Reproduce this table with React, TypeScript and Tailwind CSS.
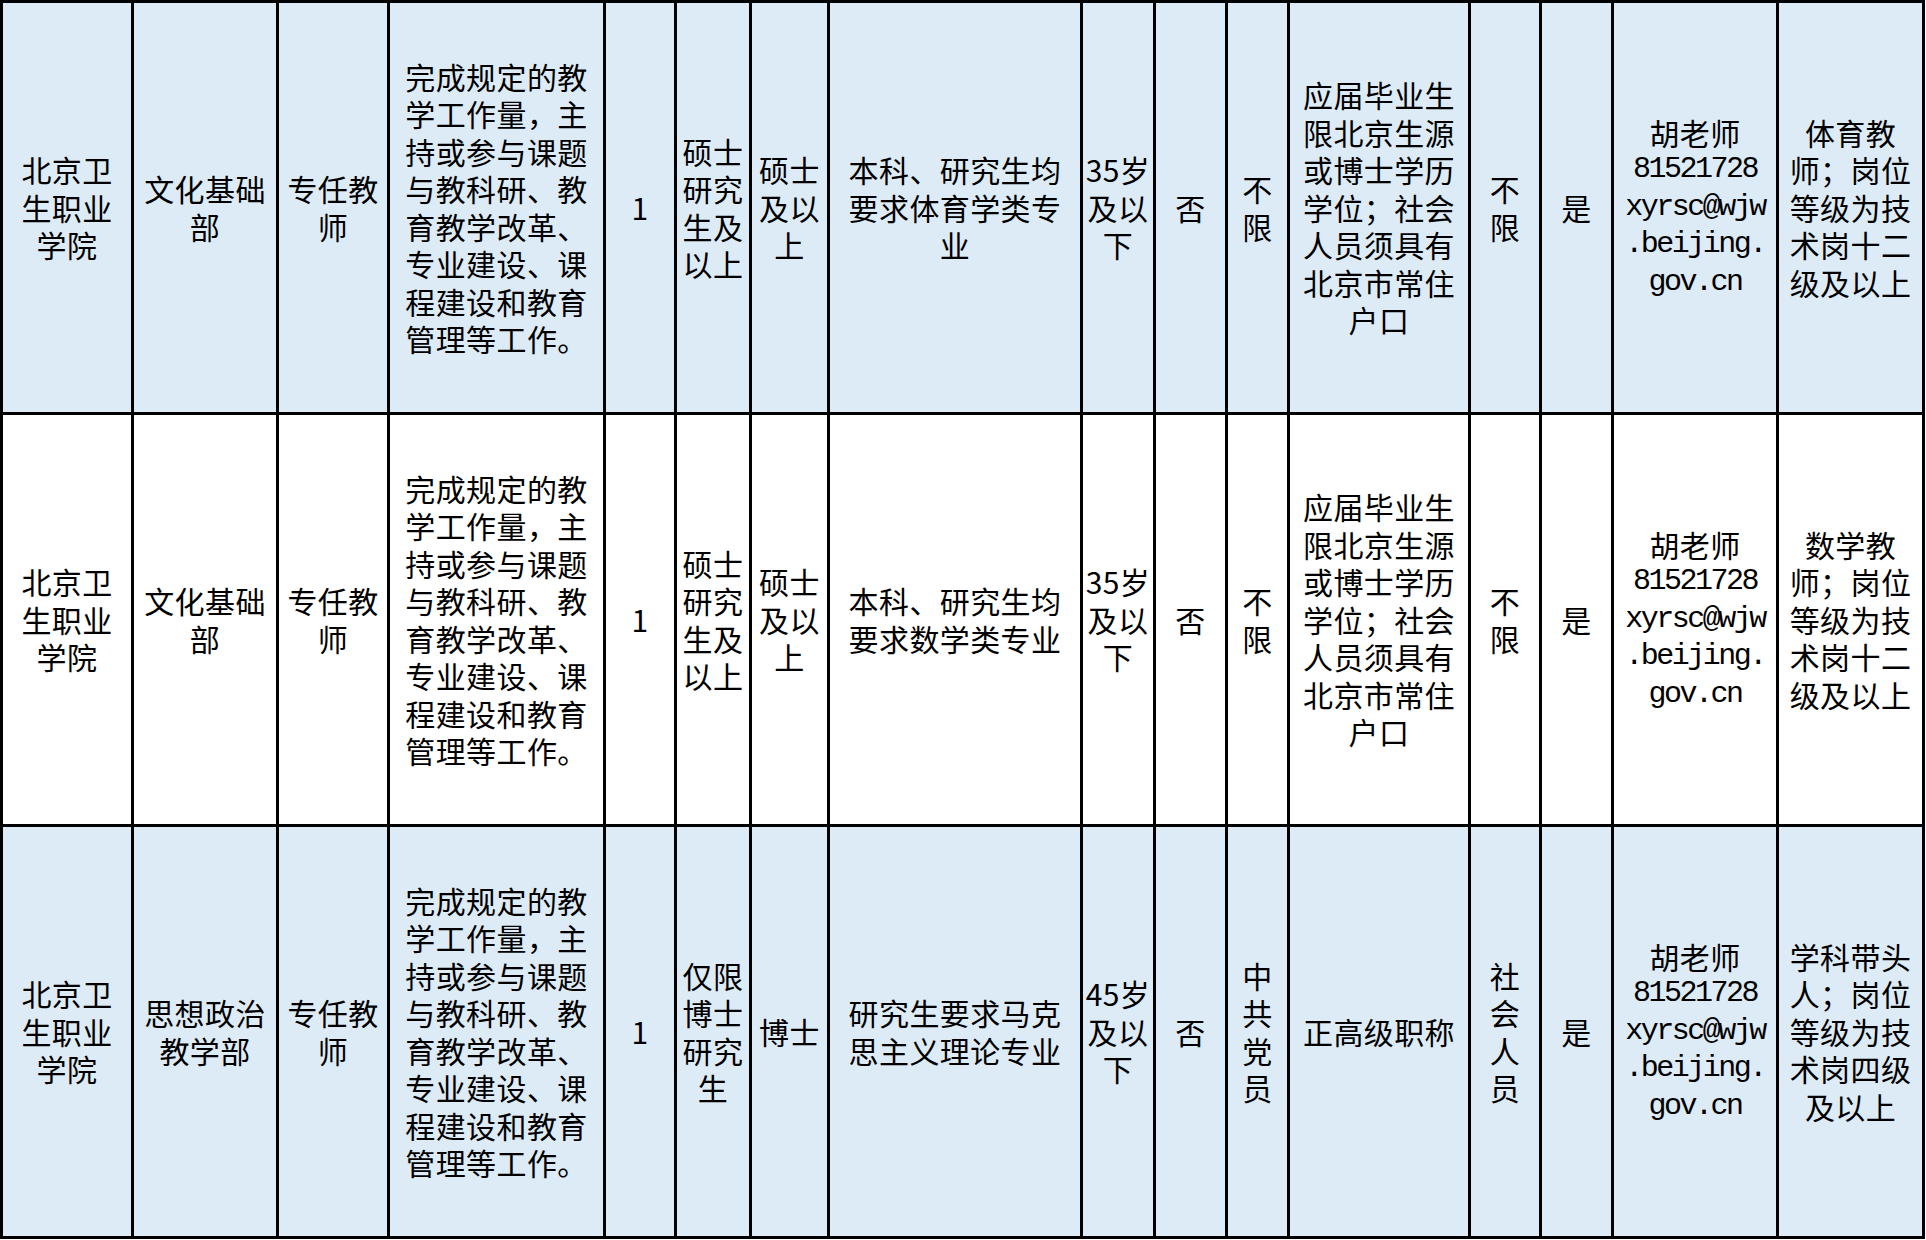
const desc = [
  '完成规定的教',
  '学工作量，主',
  '持或参与课题',
  '与教科研、教',
  '育教学改革、',
  '专业建设、课',
  '程建设和教育',
  '管理等工作。',
];

const contact = ['胡老师', '81521728', 'xyrsc@wjw', '.beijing.', 'gov.cn'];

type Row = {
  bg: string;
  cells: string[][];
};

const rows: Row[] = [
  {
    bg: 'bg-[#ddebf7]',
    cells: [
      ['北京卫', '生职业', '学院'],
      ['文化基础', '部'],
      ['专任教', '师'],
      desc,
      ['1'],
      ['硕士', '研究', '生及', '以上'],
      ['硕士', '及以', '上'],
      ['本科、研究生均', '要求体育学类专', '业'],
      ['35岁', '及以', '下'],
      ['否'],
      ['不', '限'],
      ['应届毕业生', '限北京生源', '或博士学历', '学位；社会', '人员须具有', '北京市常住', '户口'],
      ['不', '限'],
      ['是'],
      contact,
      ['体育教', '师；岗位', '等级为技', '术岗十二', '级及以上'],
    ],
  },
  {
    bg: 'bg-white',
    cells: [
      ['北京卫', '生职业', '学院'],
      ['文化基础', '部'],
      ['专任教', '师'],
      desc,
      ['1'],
      ['硕士', '研究', '生及', '以上'],
      ['硕士', '及以', '上'],
      ['本科、研究生均', '要求数学类专业'],
      ['35岁', '及以', '下'],
      ['否'],
      ['不', '限'],
      ['应届毕业生', '限北京生源', '或博士学历', '学位；社会', '人员须具有', '北京市常住', '户口'],
      ['不', '限'],
      ['是'],
      contact,
      ['数学教', '师；岗位', '等级为技', '术岗十二', '级及以上'],
    ],
  },
  {
    bg: 'bg-[#ddebf7]',
    cells: [
      ['北京卫', '生职业', '学院'],
      ['思想政治', '教学部'],
      ['专任教', '师'],
      desc,
      ['1'],
      ['仅限', '博士', '研究', '生'],
      ['博士'],
      ['研究生要求马克', '思主义理论专业'],
      ['45岁', '及以', '下'],
      ['否'],
      ['中', '共', '党', '员'],
      ['正高级职称'],
      ['社', '会', '人', '员'],
      ['是'],
      contact,
      ['学科带头', '人；岗位', '等级为技', '术岗四级', '及以上'],
    ],
  },
];

function Cell({ lines, bg, col }: { lines: string[]; bg: string; col: number }) {
  const isDesc = col === 3;
  const isContact = col === 14;
  return (
    <div className={`${bg} flex items-center justify-center`}>
      <div className={isDesc ? 'text-left' : 'text-center'}>
        {lines.map((line, i) => {
          const mono = isContact && i > 0;
          return (
            <div
              key={i}
              className={
                mono
                  ? "whitespace-nowrap font-['Liberation_Mono',monospace] text-[30px] leading-[37.5px] tracking-[-2.5px]"
                  : 'whitespace-nowrap tracking-[0.4px]'
              }
            >
              {line}
            </div>
          );
        })}
      </div>
    </div>
  );
}

export default function App() {
  return (
    <main className="min-h-screen bg-white font-['Noto_Sans_CJK_SC','Noto_Sans',sans-serif] text-[30px] leading-[37.5px] text-black">
      <div className="w-[1925px] bg-black p-[3px]">
        <div className="grid grid-cols-[128px_142px_108px_213px_68px_72px_75px_250px_70px_69px_59px_178px_68px_69px_162px_143px] auto-rows-[409px] gap-[3px]">
          {rows.map((row, r) =>
            row.cells.map((lines, c) => (
              <Cell key={`${r}-${c}`} lines={lines} bg={row.bg} col={c} />
            ))
          )}
        </div>
      </div>
    </main>
  );
}
